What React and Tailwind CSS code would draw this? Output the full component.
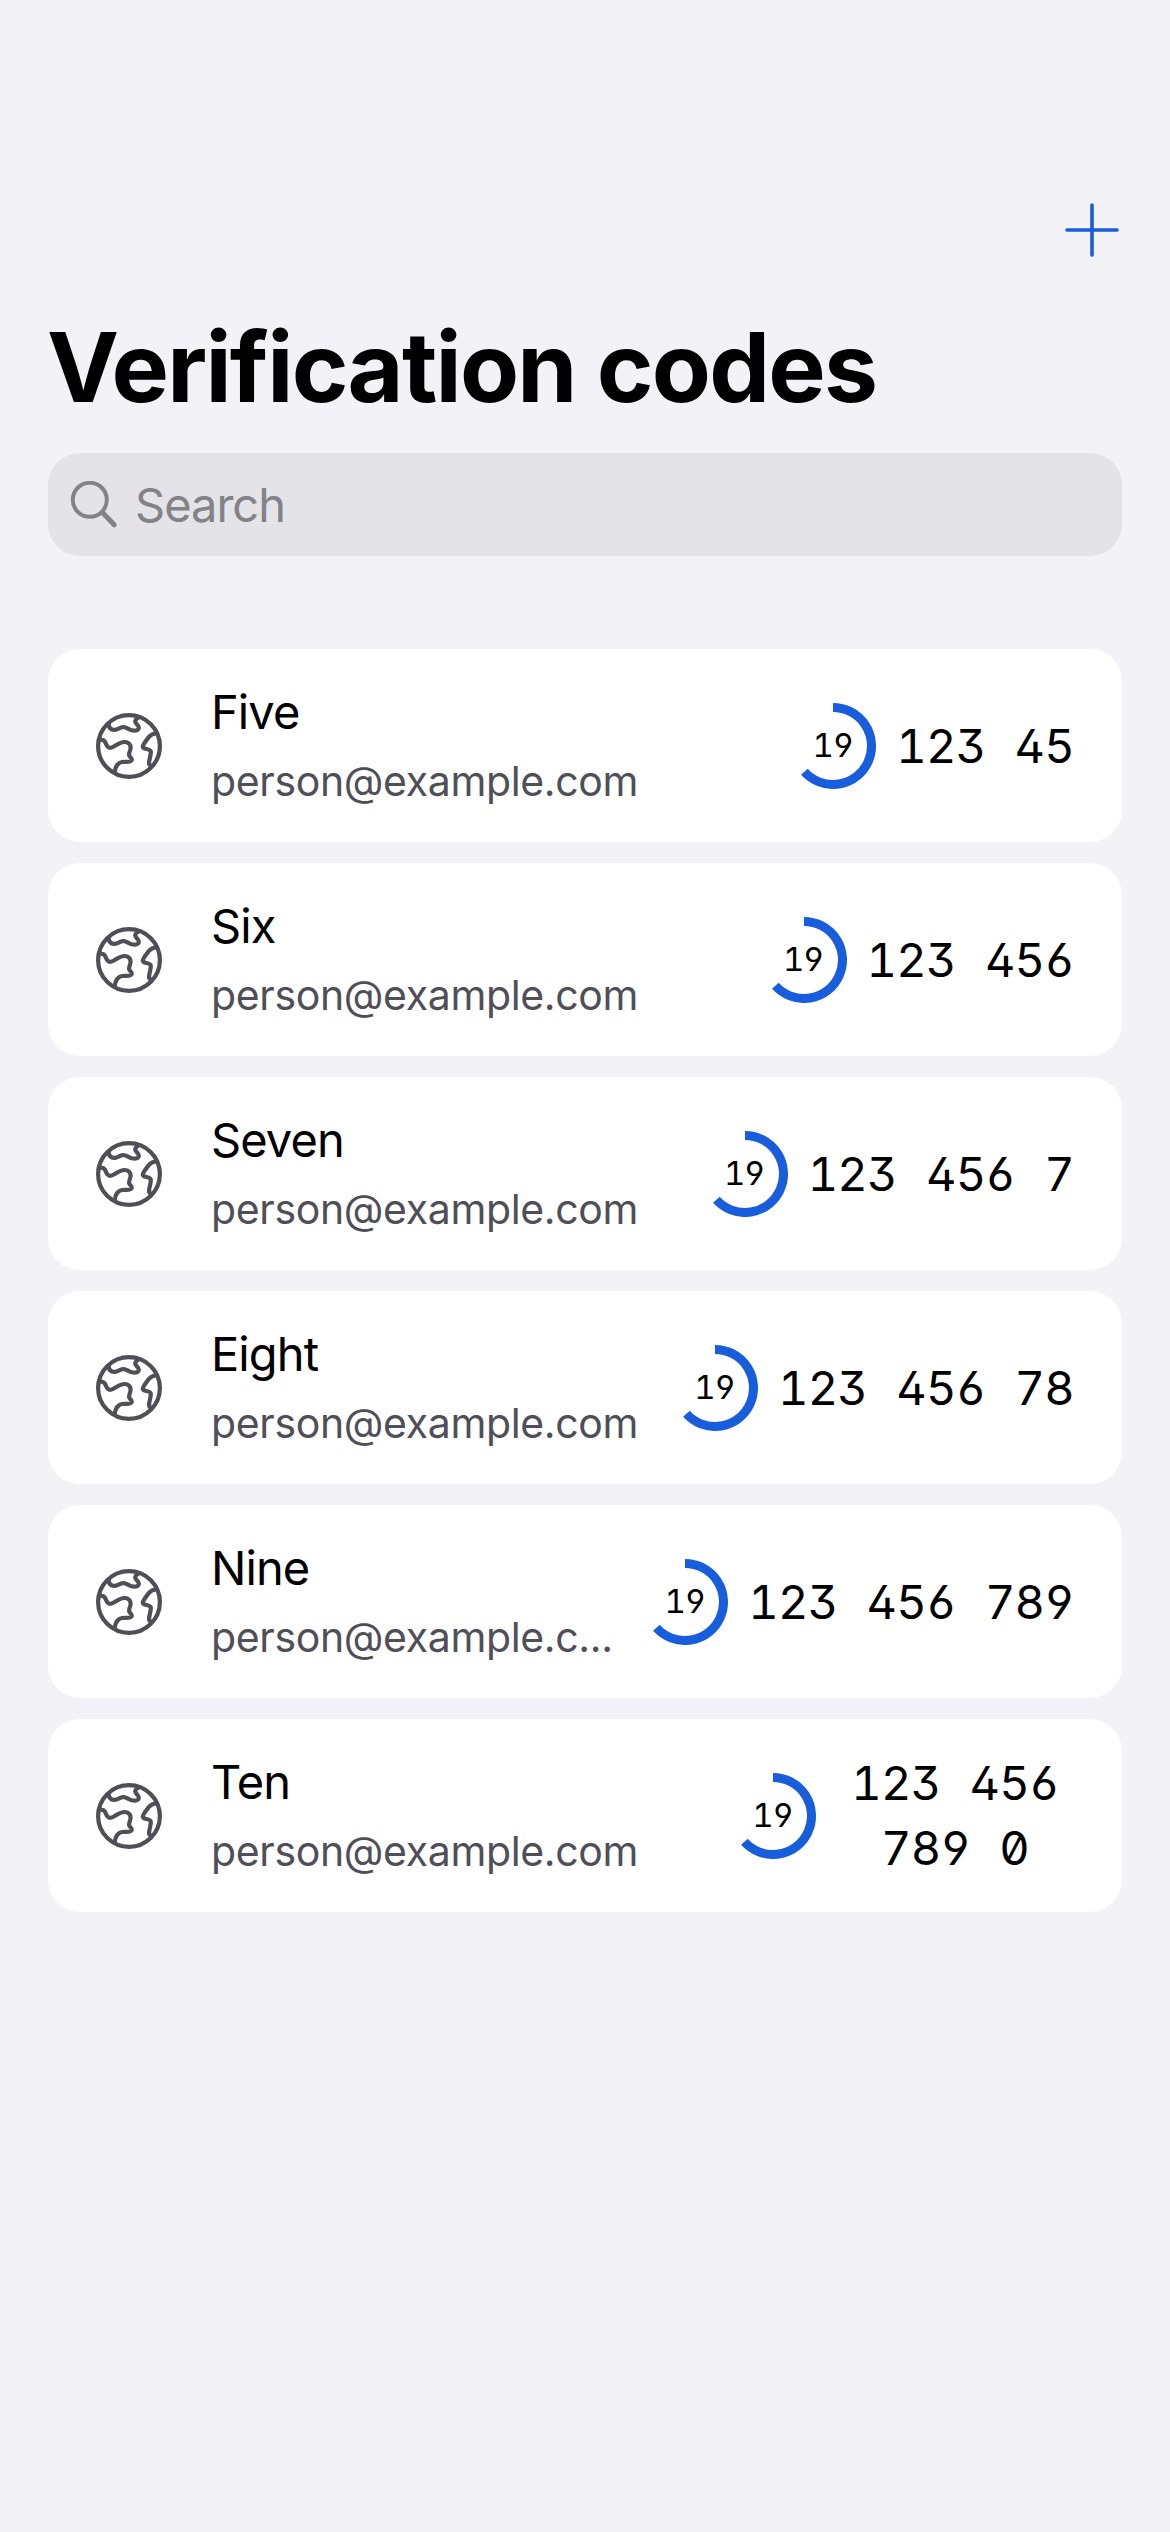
import React from "react";

const EMAIL = "person@example.com";

const ITEMS = [
  { name: "Five", code: "123 45" },
  { name: "Six", code: "123 456" },
  { name: "Seven", code: "123 456 7" },
  { name: "Eight", code: "123 456 78" },
  { name: "Nine", email: "person@example.c...", code: "123 456 789" },
  { name: "Ten", code: "123 456 789 0", wrap: true },
];

function PlusIcon() {
  return (
    <svg className="size-[54px]" viewBox="0 0 54 54" fill="none" stroke="#175ddc" strokeWidth="3.6" strokeLinecap="round">
      <path d="M27 2V52M2 27H52" />
    </svg>
  );
}

function SearchIcon() {
  return (
    <svg className="size-[48px]" viewBox="0 0 48 48" fill="none" stroke="#828287" strokeLinecap="round">
      <circle cx="19.8" cy="18.8" r="17" strokeWidth="4" />
      <path d="M32.4 31.6L44.2 43.8" strokeWidth="5" />
    </svg>
  );
}

function GlobeIcon() {
  return (
    <svg
      className="size-[66px] shrink-0"
      viewBox="0 0 66 66"
      fill="none"
      stroke="#504f58"
      strokeWidth="4.2"
      strokeLinecap="round"
      strokeLinejoin="round"
    >
      <circle cx="33" cy="33" r="30.9" />
      <path d="M12.5 11C13 15 15 17.2 19 16.8C23 16.5 24.5 14 27.5 14C31 14.2 33 17.2 37 17.5C40.5 17.8 42.8 17.2 42.8 14.5C42.8 12 39.5 11 39.2 8.5C39.2 7 41 5.5 42.5 4.5" />
      <path d="M3 27C5 26.5 7.5 26.5 8.8 28.5C10.5 31 10.5 34.8 14 34.9C18.5 35 22 29 28.5 29C32.5 29 34.8 31.5 34.6 35C34.4 38 32.5 40 33.2 42.5C34 44.5 36.2 45 35.8 47C35 49.8 30 48.5 26 49C22 49.8 19.5 53.5 18.8 58.5" />
      <path d="M60 20.5C56.5 20.5 55 21.5 53 23.8C50.5 27 46.8 31.5 46.8 33.8C47 36.5 54 35.5 54.8 38.5C55.2 42 52.8 47 53 50.5C53.2 52 54.5 52.8 56 52.5" />
    </svg>
  );
}

function Countdown() {
  return (
    <div className="grid size-[86px] shrink-0 place-items-center">
      <svg className="col-start-1 row-start-1 size-[86px]" viewBox="0 0 86 86" fill="none" stroke="#175ddc" strokeWidth="9">
        <path d="M43 4.5A38.5 38.5 0 1 1 14.39 68.76" />
      </svg>
      <span className="col-start-1 row-start-1 pr-px text-[33px] leading-none tracking-[-1.2px] [font-feature-settings:'tnum','ss01','zero','cv02','cv03','cv04']">
        19
      </span>
    </div>
  );
}

function Row({ item }) {
  return (
    <li className="flex h-[193px] items-center rounded-[32px] bg-white pl-12 pr-12">
      <GlobeIcon />
      <div className="ml-[49px] min-w-0 flex-1 self-start whitespace-nowrap pt-[31px]">
        <div className="text-[47px] leading-[64px] tracking-[-0.9px] text-black">{item.name}</div>
        <div className="mt-[9px] text-[41px] leading-[56px] tracking-[-0.35px] text-[#504f58]">{item.email ?? EMAIL}</div>
      </div>
      <div className="ml-6 flex shrink-0 items-center gap-5">
        <Countdown />
        <div
          className={`text-center text-[47px] leading-[65px] tracking-[-0.78px] [word-spacing:17.4px] [font-feature-settings:'tnum','ss01','zero','cv02','cv03','cv04'] ${
            item.wrap ? "w-[238px] pb-0.5" : "whitespace-nowrap"
          }`}
        >
          {item.code}
        </div>
      </div>
    </li>
  );
}

export default function App() {
  return (
    <div className="flex h-[2532px] w-[1170px] flex-col bg-[#f2f2f7] px-12 pt-[203px] font-['Inter',sans-serif] text-black">
      <div className="flex justify-end pr-[3px]">
        <button type="button" aria-label="Add">
          <PlusIcon />
        </button>
      </div>
      <h1 className="-ml-px mt-[52px] text-[96.5px] font-bold leading-[116px] tracking-[-1.75px]">Verification codes</h1>
      <div className="mt-7 flex h-[103px] items-center gap-[17px] rounded-[32px] bg-[#e3e3e8] pl-[22px]">
        <SearchIcon />
        <span className="text-[47px] leading-none tracking-[-1px] text-[#828287]">Search</span>
      </div>
      <ul className="mt-[93px] flex flex-col gap-[21px]">
        {ITEMS.map((item) => (
          <Row key={item.name} item={item} />
        ))}
      </ul>
    </div>
  );
}
